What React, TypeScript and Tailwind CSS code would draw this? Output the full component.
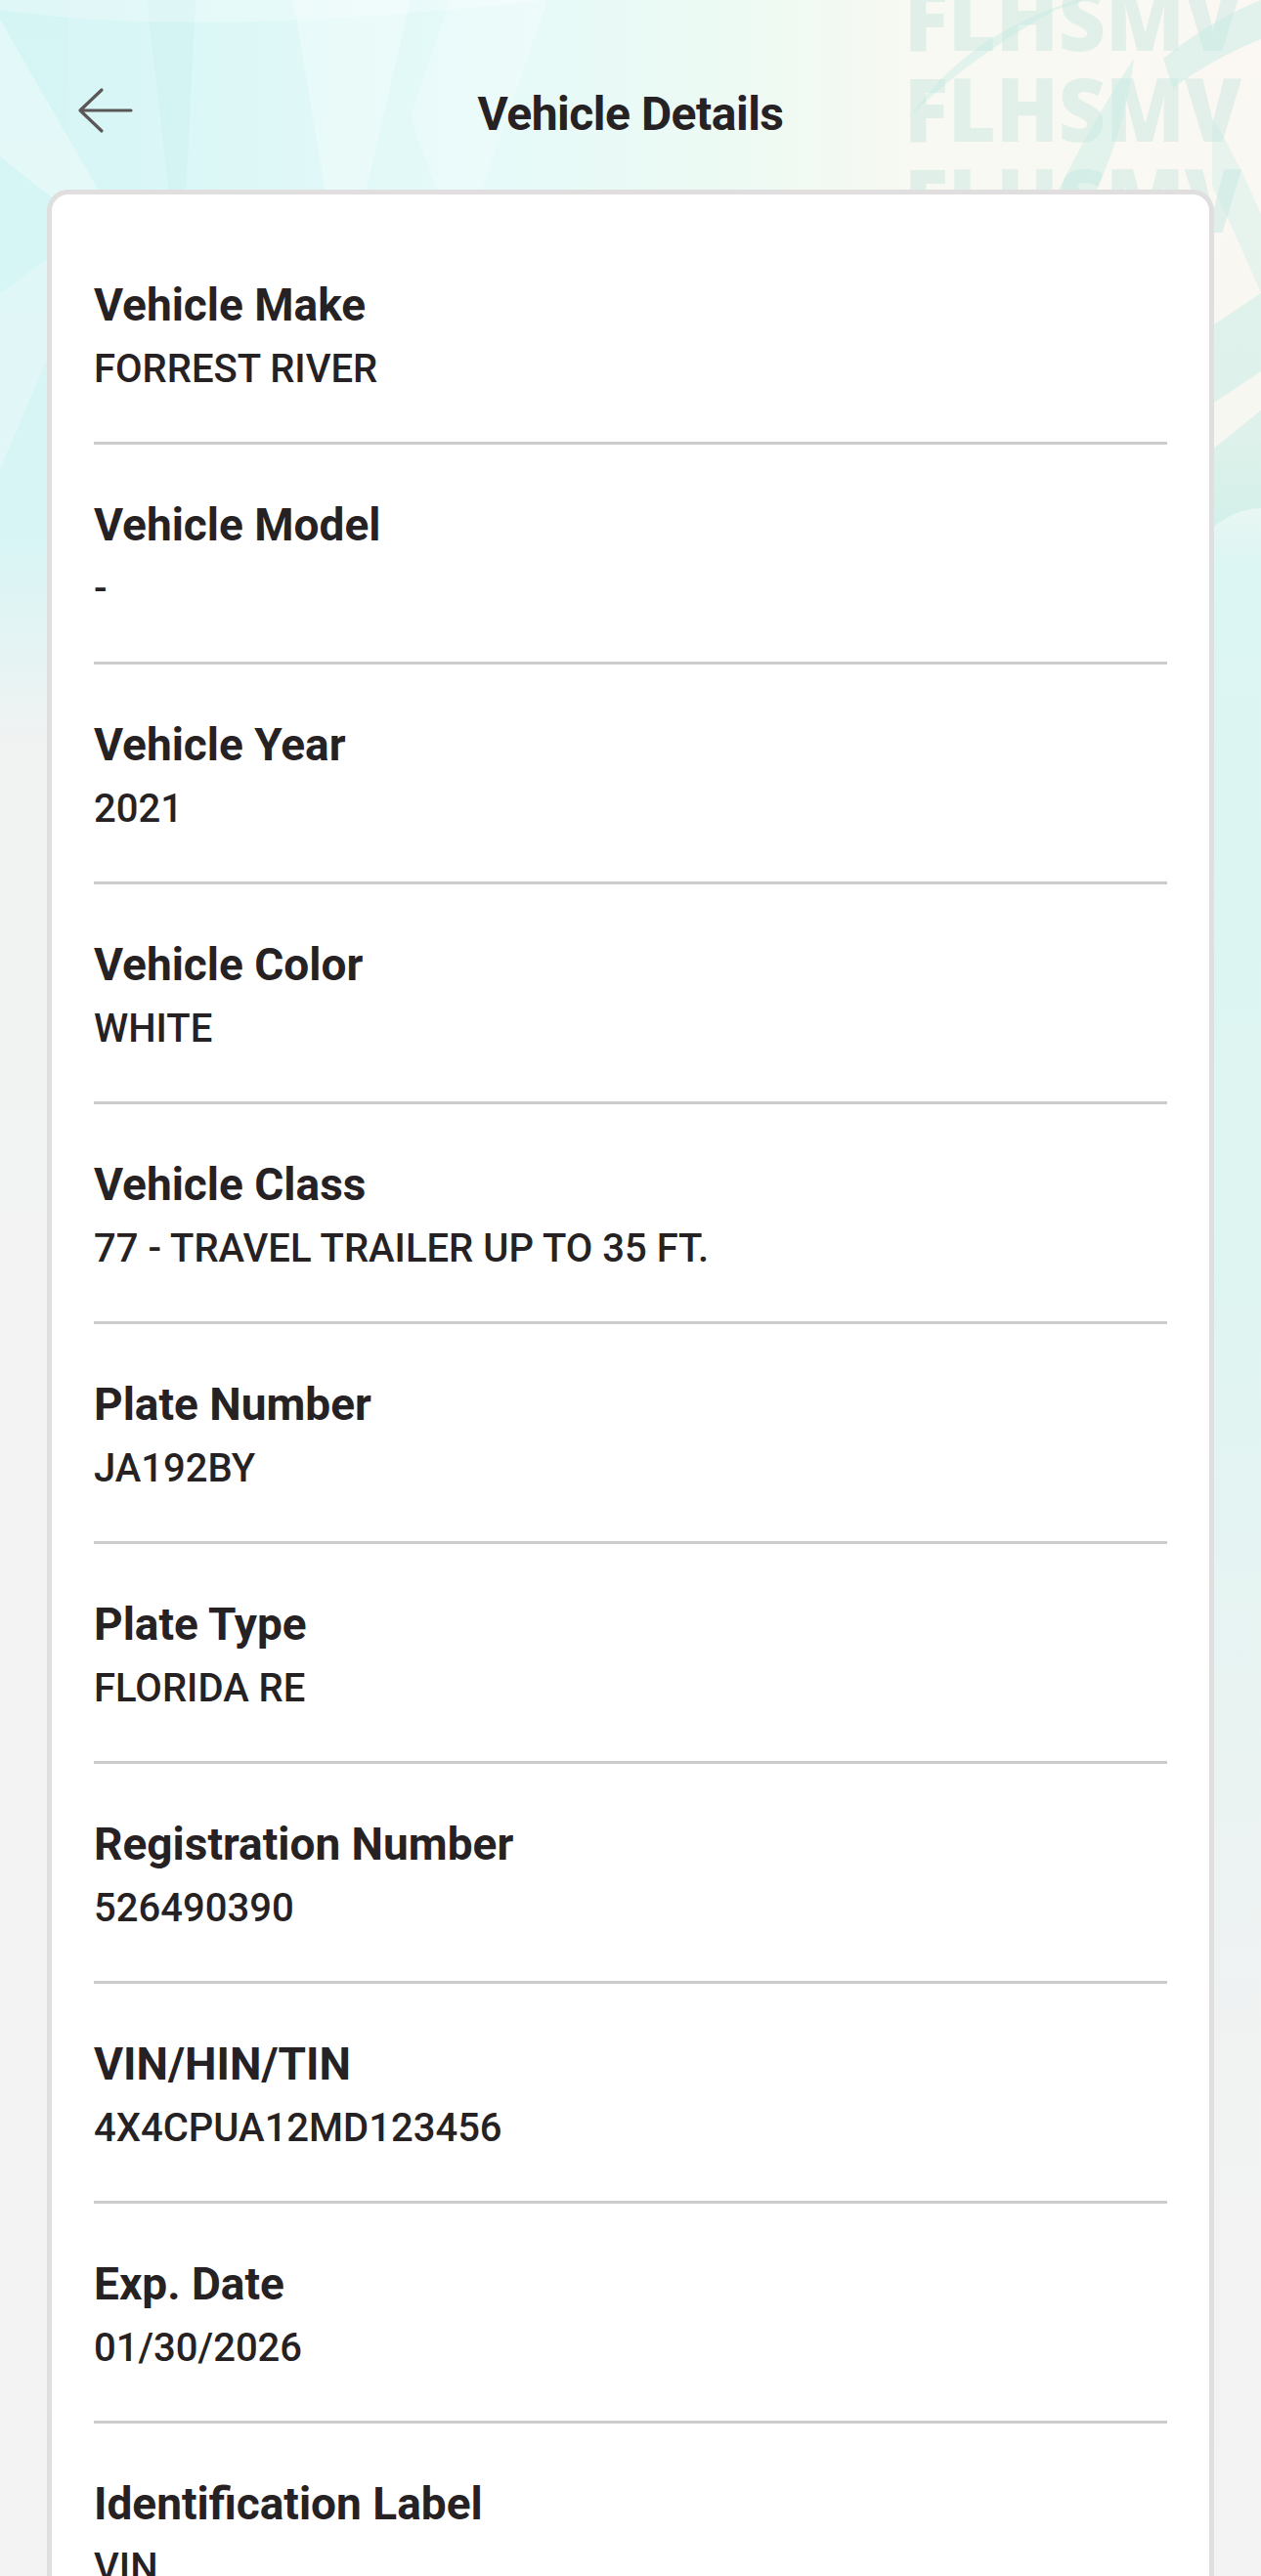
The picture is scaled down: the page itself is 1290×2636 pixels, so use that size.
import React from "react";

const rows: { label: string; value: string }[] = [
  { label: "Vehicle Make", value: "FORREST RIVER" },
  { label: "Vehicle Model", value: "-" },
  { label: "Vehicle Year", value: "2021" },
  { label: "Vehicle Color", value: "WHITE" },
  { label: "Vehicle Class", value: "77 - TRAVEL TRAILER UP TO 35 FT." },
  { label: "Plate Number", value: "JA192BY" },
  { label: "Plate Type", value: "FLORIDA RE" },
  { label: "Registration Number", value: "526490390" },
  { label: "VIN/HIN/TIN", value: "4X4CPUA12MD123456" },
  { label: "Exp. Date", value: "01/30/2026" },
  { label: "Identification Label", value: "VIN" },
];

function Backdrop() {
  return (
    <svg
      className="absolute inset-0 w-full h-full pointer-events-none"
      viewBox="0 0 1290 2636"
      preserveAspectRatio="none"
      aria-hidden="true"
    >
      <defs>
        <linearGradient id="topband" x1="0" y1="0" x2="1" y2="0">
          <stop offset="0" stopColor="#d5f5f5" />
          <stop offset="0.4" stopColor="#e6faf9" />
          <stop offset="0.6" stopColor="#eefaf3" />
          <stop offset="0.72" stopColor="#f7f9f2" />
          <stop offset="1" stopColor="#fbf8f3" />
        </linearGradient>
        <linearGradient id="leftstrip" x1="0" y1="0" x2="0" y2="1">
          <stop offset="0" stopColor="#d5f5f5" />
          <stop offset="0.21" stopColor="#d8f5f5" />
          <stop offset="0.29" stopColor="#f1f2f2" />
          <stop offset="1" stopColor="#f4f3f3" />
        </linearGradient>
        <linearGradient id="rightstrip" x1="0" y1="0" x2="0" y2="1">
          <stop offset="0" stopColor="#fbf8f3" />
          <stop offset="0.17" stopColor="#f7f7f2" />
          <stop offset="0.22" stopColor="#dcf6f3" />
          <stop offset="0.5" stopColor="#dff5f2" />
          <stop offset="0.8" stopColor="#f1f2f2" />
          <stop offset="1" stopColor="#f4f3f3" />
        </linearGradient>
      </defs>
      <rect x="0" y="0" width="1290" height="300" fill="url(#topband)" />
      <rect x="0" y="0" width="70" height="2636" fill="url(#leftstrip)" />
      <rect x="1220" y="0" width="70" height="2636" fill="url(#rightstrip)" />

      {/* faint palm fronds, left */}
      <path d="M0 20 L150 280 L0 160 Z" fill="#ffffff" opacity="0.35" />
      <path d="M300 0 L420 0 L350 300 Z" fill="#ffffff" opacity="0.3" />
      <path d="M150 0 L200 0 L185 300 Z" fill="#c9f0f0" opacity="0.4" />
      <path d="M460 0 L560 0 L470 260 L420 120 Z" fill="#ffffff" opacity="0.25" />
      <path d="M0 300 Q 60 260 120 200 L 0 480 Z" fill="#ffffff" opacity="0.25" />
      <path d="M0 10 Q 200 40 560 0 L 0 0 Z" fill="#ffffff" opacity="0.25" />

      {/* watermark */}
      <g fill="#cfe9e3" opacity="0.55" fontFamily="'Open Sans', sans-serif" fontWeight="800" fontSize="90">
        <text x="925" y="52" textLength="345" lengthAdjust="spacingAndGlyphs">FLHSMV</text>
        <text x="925" y="145" textLength="345" lengthAdjust="spacingAndGlyphs">FLHSMV</text>
        <text x="925" y="238" textLength="345" lengthAdjust="spacingAndGlyphs">FLHSMV</text>
      </g>

      {/* faint palm fronds, right */}
      <path d="M930 120 Q 1000 20 1140 -10 L 1080 10 Q 990 60 930 120 Z" fill="#c6ebe4" opacity="0.45" />
      <path d="M1080 200 Q 1120 120 1160 60 Q 1150 140 1110 220 Z" fill="#c6ebe4" opacity="0.45" />
      <path d="M1190 60 Q 1240 20 1290 0 L 1290 40 Q 1240 60 1200 90 Z" fill="#c6ebe4" opacity="0.5" />
      <path d="M1230 340 Q 1260 320 1290 300 L 1290 380 Q 1260 400 1230 420 Z" fill="#c6ebe4" opacity="0.5" />
      <path d="M1240 460 Q 1265 440 1290 420 L 1290 520 Q 1265 520 1240 540 Z" fill="#bfe8e1" opacity="0.45" />
      <path d="M1240 120 Q 1270 170 1290 220 L 1290 300 Q 1260 230 1240 190 Z" fill="#c6ebe4" opacity="0.35" />
    </svg>
  );
}

function BackArrow() {
  return (
    <svg width="60" height="50" viewBox="0 0 60 50" fill="none" aria-hidden="true">
      <path
        d="M56 25 H4 M26 4 L4 25 L26 46"
        stroke="#5b5657"
        strokeWidth="3.2"
        strokeLinecap="round"
        strokeLinejoin="round"
      />
    </svg>
  );
}

export default function App() {
  return (
    <div className="relative h-[2636px] w-full overflow-hidden bg-[#f3f2f3] [font-family:Roboto,'Noto_Sans',sans-serif] text-[#262223]">
      <Backdrop />
      <div className="relative">
        <header className="grid h-[194px] grid-cols-[1fr_auto_1fr] items-start pt-[88px]">
          <div className="pl-[78px]">
            <button type="button" aria-label="Back" className="block">
              <BackArrow />
            </button>
          </div>
          <h1 className="mt-[5px] text-[48px] font-bold leading-[48px] tracking-[-0.5px]">
            Vehicle Details
          </h1>
          <div />
        </header>

        <section className="mx-[48px] rounded-[22px] border-[5px] border-[#e0dede] bg-white px-[43px] pt-[31px]">
          {rows.map((r) => (
            <div key={r.label} className="border-b-[3px] border-[#cdcbcc] pt-[59px] pb-[54px]">
              <div className="text-[46px] font-bold leading-[46px]">{r.label}</div>
              <div className="mt-[23px] text-[40px] font-medium leading-[40px]">{r.value}</div>
            </div>
          ))}
        </section>
      </div>
    </div>
  );
}
